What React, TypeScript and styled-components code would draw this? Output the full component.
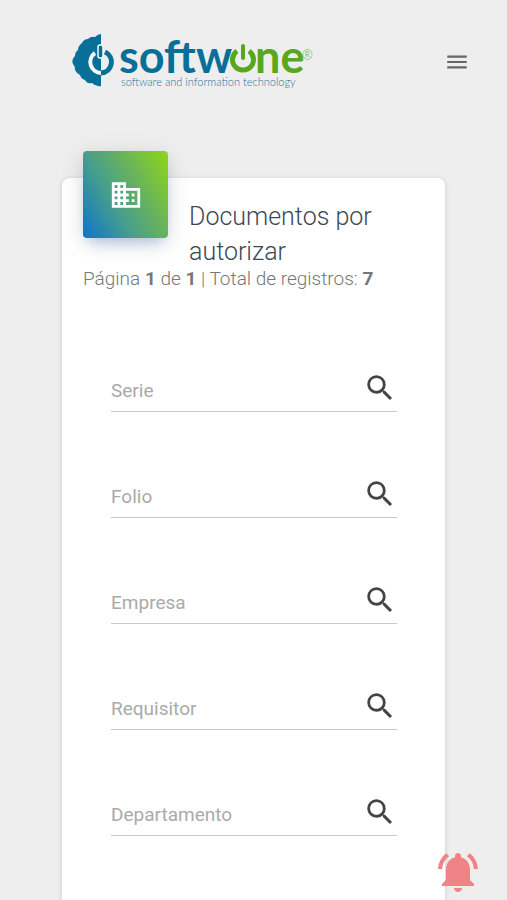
import React from "react";
import styled, { createGlobalStyle } from "styled-components";
import { MdDomain, MdMenu, MdNotificationsActive, MdSearch } from "react-icons/md";

const GlobalStyle = createGlobalStyle`
  * { box-sizing: border-box; }
  html { background: #eeeeee; }
  body {
    margin: 0;
    font-family: Roboto, "Liberation Sans", sans-serif;
    font-weight: 300;
    color: #3c4858;
  }
  button { font: inherit; border: 0; padding: 0; background: none; cursor: pointer; }
`;

const Page = styled.div`
  display: flex;
  flex-direction: column;
  min-height: 100vh;
  background: #eeeeee;
`;

const TopBar = styled.header`
  display: flex;
  align-items: center;
  justify-content: space-between;
  padding: 28px 36px 0 68px;
`;

const Brand = styled.a`
  display: block;
  height: 68px;
`;

const LogoSvg = styled.svg`
  display: block;
  overflow: visible;
  font-family: Lato, sans-serif;
`;

const MenuButton = styled.button`
  display: grid;
  place-items: center;
  width: 28px;
  height: 28px;
  color: #666666;
`;

const Content = styled.main`
  display: flex;
  flex: 1;
  flex-direction: column;
  padding: 82px 62px 0;
`;

const Card = styled.section`
  flex: 1;
  padding: 0 20px 50px 21px;
  border-radius: 8px 8px 0 0;
  background: #ffffff;
  box-shadow: 0 1px 5px rgba(0, 0, 0, 0.16);
`;

const CardHeader = styled.div`
  display: flex;
  align-items: flex-start;
  gap: 21px;
`;

const CardIcon = styled.div`
  display: grid;
  place-items: center;
  flex: none;
  width: 85px;
  height: 87px;
  margin-top: -27px;
  border-radius: 4px;
  color: #ffffff;
  background: linear-gradient(60deg, #0c74cc 0%, #459d8e 36%, #68b35c 64%, #8fd816 100%);
  box-shadow: 0 5px 24px rgba(0, 0, 0, 0.12), 0 8px 14px -6px rgba(20, 100, 200, 0.35);
`;

const Title = styled.h1`
  margin: 21px 0 0;
  font-size: 25px;
  line-height: 35px;
  font-weight: 300;
`;

const Summary = styled.p`
  margin: 0;
  font-size: 19px;
  line-height: 20px;
  color: #777777;

  b { font-weight: 700; }
`;

const Filters = styled.form`
  display: grid;
  gap: 61px;
  padding: 78px 28px 0;
`;

const Field = styled.div`
  display: flex;
  align-items: flex-start;
  height: 45px;
  border-bottom: 1px solid #c8c8c8;
`;

const FieldInput = styled.input`
  flex: 1;
  min-width: 0;
  height: 44px;
  padding: 2px 0 0;
  border: 0;
  outline: 0;
  background: transparent;
  font: 400 19px/24px Roboto, "Liberation Sans", sans-serif;
  color: #3c4858;

  &::placeholder { color: #aaaaaa; opacity: 1; }
`;

const SearchButton = styled.button`
  display: grid;
  place-items: center;
  width: 34px;
  height: 42px;
  color: #444444;
`;

const AlertButton = styled.button`
  position: fixed;
  right: 25px;
  bottom: 4px;
  display: grid;
  place-items: center;
  color: #ef8386;
`;

const filters = ["Serie", "Folio", "Empresa", "Requisitor", "Departamento"];

function Logo() {
  return (
    <LogoSvg width="250" height="68" viewBox="68 28 250 68" role="img" aria-label="softwone">
      <path
        d="M101 34 Q98 34 95 37 Q91 36 88 39 Q84 39 82 43 Q78 46 78 50 Q75 52 75 56 Q71 60 73 64 Q75 66 75 70 Q77 74 80 75 Q81 79 85 80 Q87 84 92 83 Q96 87 101 86 Z"
        fill="#087098"
      />
      <path d="M95 53 A11 11 0 0 0 101 73" fill="none" stroke="#f4f8f9" strokeWidth="4" />
      <path d="M105 52 A11 11 0 0 1 101 73" fill="none" stroke="#087098" strokeWidth="5" />
      <rect x="98" y="45" width="5" height="13" rx="2" fill="#087098" stroke="#f4f8f9" strokeWidth="1.5" />
      <text x="119" y="73" fontSize="45" fontWeight="700" fill="#087098">softw</text>
      <path d="M237 51 A10.5 10.5 0 1 0 249 51" fill="none" stroke="#58a81d" strokeWidth="5" />
      <path d="M243 46 V58" stroke="#58a81d" strokeWidth="4" strokeLinecap="round" />
      <text x="255" y="73" fontSize="45" fontWeight="700" fill="#58a81d">ne</text>
      <text x="302" y="60" fontSize="13" fill="#58a81d">®</text>
      <text x="121" y="86" fontSize="11" fill="#1c7499">software and information technology</text>
    </LogoSvg>
  );
}

export default function App() {
  return (
    <Page>
      <GlobalStyle />
      <TopBar>
        <Brand href="#"><Logo /></Brand>
        <MenuButton type="button" aria-label="Abrir menú"><MdMenu size={26} /></MenuButton>
      </TopBar>
      <Content>
        <Card>
          <CardHeader>
            <CardIcon><MdDomain size={34} /></CardIcon>
            <Title>Documentos por autorizar</Title>
          </CardHeader>
          <Summary>Página <b>1</b> de <b>1</b> | Total de registros: <b>7</b></Summary>
          <Filters onSubmit={(event) => event.preventDefault()}>
            {filters.map((name) => (
              <Field key={name}>
                <FieldInput type="text" name={name.toLowerCase()} placeholder={name} aria-label={name} />
                <SearchButton type="submit" aria-label={`Buscar por ${name}`}><MdSearch size={34} /></SearchButton>
              </Field>
            ))}
          </Filters>
        </Card>
      </Content>
      <AlertButton type="button" aria-label="Notificaciones"><MdNotificationsActive size={48} /></AlertButton>
    </Page>
  );
}
